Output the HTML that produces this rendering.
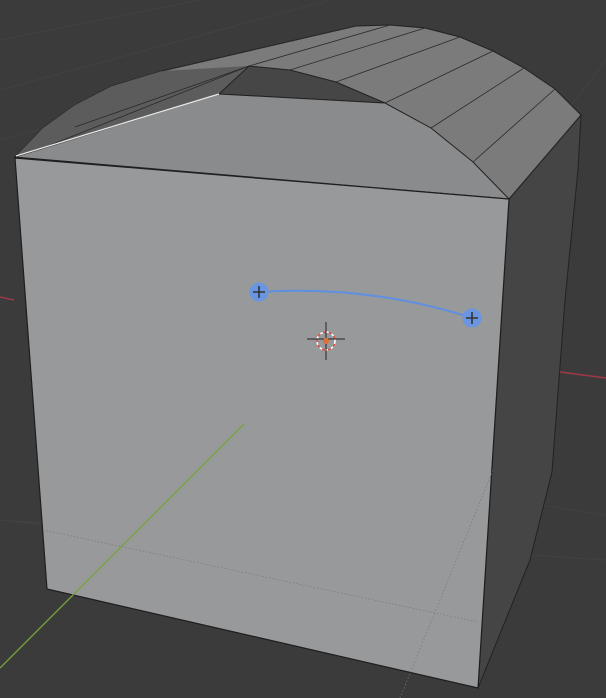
<!DOCTYPE html>
<html><head><meta charset="utf-8"><style>html,body{margin:0;padding:0;background:#3b3b3b;overflow:hidden}svg{display:block}</style></head>
<body>
<svg width="606" height="698" viewBox="0 0 606 698" xmlns="http://www.w3.org/2000/svg">
<rect width="606" height="698" fill="#3b3b3b"/>
<g stroke="#444" stroke-width="1" fill="none" opacity="0.8">
<path d="M0 40 L200 0"/><path d="M0 90 L330 0"/><path d="M0 140 L150 100"/><path d="M0 520 L606 560"/>
<path d="M540 505 L606 515"/><path d="M0 520 L45 525"/><path d="M560 120 L606 60"/>
</g>
<line x1="0" y1="297" x2="14" y2="300" stroke="#9a3a48" stroke-width="1.5"/>
<line x1="537" y1="369" x2="606" y2="378" stroke="#a03848" stroke-width="1.5"/>
<!-- right face -->
<polygon points="509,199 581,115 578,170 565,300 552,472 530,560 478,688" fill="#454545" stroke="#222" stroke-width="1"/>
<!-- top outer region -->
<path d="M15,157 L43,128 L75,105 L112,86 L162,71 L356,26 L390,25 L425,28 L460,37 L493,51 L524,68 L555,89 L581,115 L509,199 Z" fill="#7b7b7b" stroke="#222" stroke-width="1"/>
<!-- left bevel darker -->
<polygon points="15,157 43,128 75,105 112,86 162,71 249,66 219,94" fill="#5c5c5c"/>
<g stroke="#2a2a2a" stroke-width="0.8" fill="none">
<path d="M43,148 L249,66"/><path d="M75,127 L249,66"/>
<path d="M162,71 L356,26"/><path d="M249,66 L390,25"/><path d="M290,70 L425,28"/><path d="M336,82 L460,37"/>
<path d="M385,103 L493,51"/><path d="M431,128 L524,68"/><path d="M473,162 L555,89"/>
</g>
<!-- dark panel -->
<polygon points="219,94 249,66 290,70 336,82 385,103" fill="#464646" stroke="#222" stroke-width="1"/>
<!-- central top face -->
<polygon points="15,157 219,94 385,103 431,128 473,162 509,199" fill="#8a8b8c" stroke="#222" stroke-width="1"/>
<line x1="16" y1="156" x2="219" y2="94" stroke="#e8e8e8" stroke-width="1.3"/>
<!-- front face -->
<polygon points="15,158 509,199 478,688 47,589" fill="#98999b" stroke="#1e1e1e" stroke-width="1.2"/>
<g stroke="#777" stroke-width="0.7" stroke-dasharray="1.5 2" fill="none">
<path d="M43,530 L478,622"/><path d="M493,470 L400,698"/>
</g>
<line x1="0" y1="668" x2="244" y2="424" stroke="#7aa33a" stroke-width="1.3"/>
<path d="M259,292 Q370,285 472,318" stroke="#5f8fe0" stroke-width="2" fill="none"/>
<circle cx="259" cy="292" r="9.5" fill="#6a95e0"/>
<circle cx="472" cy="318" r="9.5" fill="#6a95e0"/>
<g stroke="#333" stroke-width="1.6"><path d="M259,286 V298 M253,292 H265"/><path d="M472,312 V324 M466,318 H478"/></g>
<circle cx="326" cy="341" r="9" fill="none" stroke="#fff" stroke-width="1.5" stroke-dasharray="3 3"/>
<circle cx="326" cy="341" r="9" fill="none" stroke="#e05040" stroke-width="1.5" stroke-dasharray="3 3" stroke-dashoffset="3"/>
<g stroke="#222" stroke-width="1"><path d="M326,322 V360 M307,339 H345"/></g>
<circle cx="326" cy="341" r="3" fill="#e0703a"/>
</svg>
</body></html>
